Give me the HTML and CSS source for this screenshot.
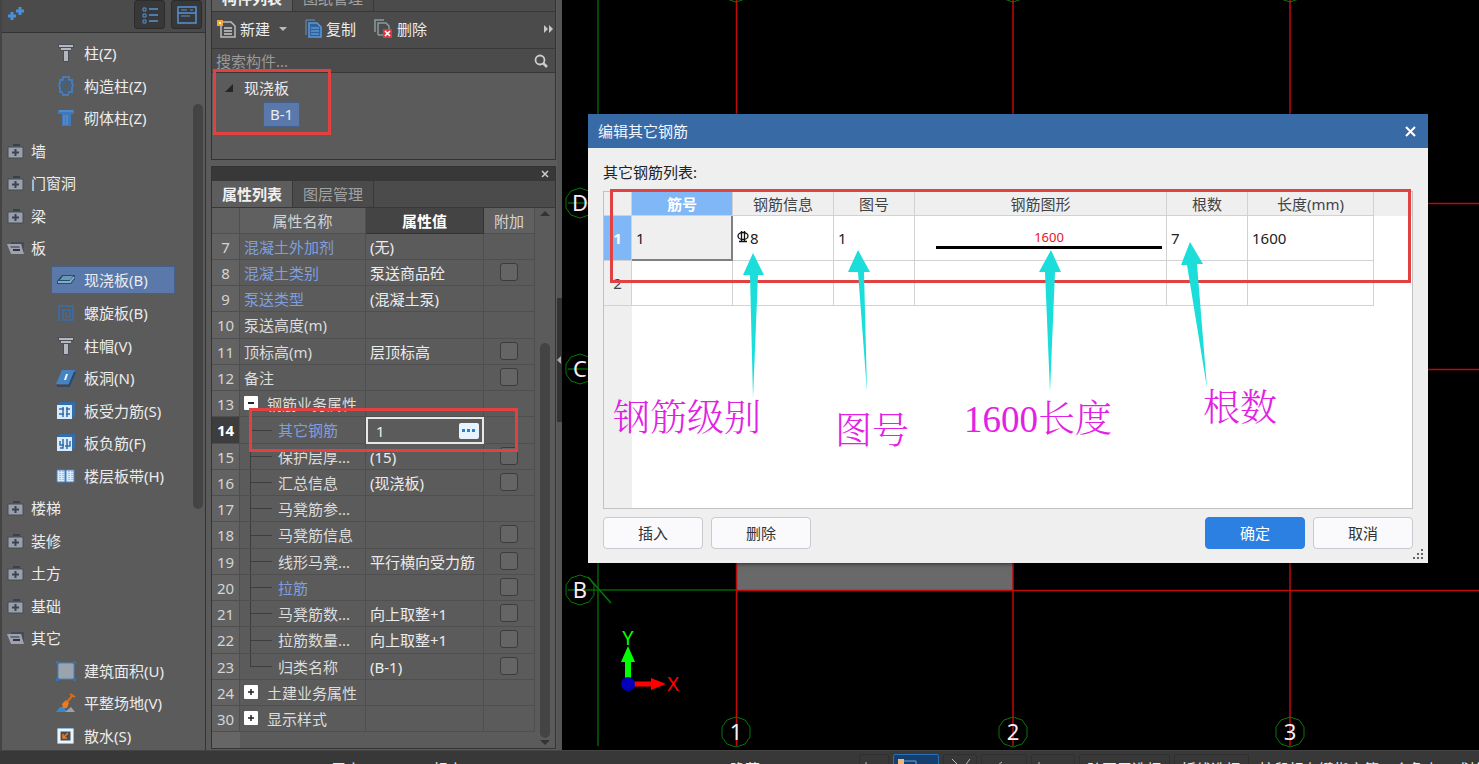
FILE: index.html
```html
<!DOCTYPE html>
<html lang="zh-CN">
<head>
<meta charset="utf-8">
<title>编辑其它钢筋</title>
<link rel="stylesheet" href="styles.css">
</head>
<body>
<svg class="defs" aria-hidden="true">
  <symbol id="folder" viewBox="0 0 18 16"><path d="M6 3V1h7v2z" fill="#39414c"/><path d="M1 4h15v11H1z" fill="#9a9fac" stroke="#464b55"/><path d="M8.500 6v7M5 9.500h7" stroke="#3d434e" stroke-width="2"/></symbol>
  <symbol id="open" viewBox="0 0 18 16"><path d="M4 3h12v9" fill="none" stroke="#454b55" stroke-width="2"/><path d="M0 4h14l3 10H4z" fill="#9da2ae"/><path d="M3 6h9l1 2H4z" fill="#656b76"/><path d="M6 10h7" stroke="#30363f" stroke-width="2"/></symbol>
  <symbol id="column" viewBox="0 0 20 20"><path d="M2 1h16v4l-3 1v2h-2v11H7V8H5V6L2 5z" fill="#4a4e56"/><path d="M3 3h14M5 6h10" stroke="#b3b7be" stroke-width="2"/><path d="M8 8h4v10H8z" fill="#b3b7be"/></symbol>
  <symbol id="tiecol" viewBox="0 0 20 20"><path d="M7 1h6v3h3v3l1 2-1 3v4h-3l-1 3H7l-1-3H4v-4L3 9l1-2V4h3z" fill="none" stroke="#477bb7" stroke-width="2"/><path d="M8 5h4v3h2v4h-2v3H8v-3H6V8h2z" fill="none" stroke="#3e648d" stroke-width="1.500"/></symbol>
  <symbol id="brickcol" viewBox="0 0 20 20"><path d="M2 2h16v4h-3v12H6V6H2z" fill="#4079bb"/><path d="M3 3h14M8 7v10M11 7v10" stroke="#6298d0"/></symbol>
  <symbol id="slab" viewBox="0 0 20 20"><path d="M1 11 6 5h13v4l-4 5H1z" fill="#244e70"/><path d="M4 10 7 6h10l-3 4z" fill="#6b99b2"/><path d="M2 12h12l4-5" fill="none" stroke="#84aec3" stroke-width="2"/></symbol>
  <symbol id="spiral" viewBox="0 0 20 20"><path d="M3 18V3h14v14H7V7h7v7h-4v-4" fill="none" stroke="#416997" stroke-width="2"/></symbol>
  <symbol id="hole" viewBox="0 0 20 20"><path d="M6 2h13l-6 14H0z" fill="#4683c2"/><path d="m1 17 1 1h11l6-14" fill="none" stroke="#254b76" stroke-width="2"/><path d="m8 12 2-6h2l-2 6z" fill="#f0f7ff"/></symbol>
  <symbol id="rebar" viewBox="0 0 20 20"><path d="M1 4 4 1h15v14l-3 3H1z" fill="#346da7"/><path d="M1 4h15v14H1z" fill="#d7ebff"/><path d="M3 8h5M10 8h4M3 13h5M10 13h4M7 6v10M11 6v10" stroke="#366ca5" stroke-width="1.500"/></symbol>
  <symbol id="negbar" viewBox="0 0 20 20"><path d="M1 4 4 1h15v14l-3 3H1z" fill="#346da7"/><path d="M1 4h15v14H1z" fill="#d7ebff"/><path d="M7 6v9H4M4 8v4h4M11 6v10M14 8v5H9" fill="none" stroke="#366ca5" stroke-width="1.500"/></symbol>
  <symbol id="strip" viewBox="0 0 20 20"><path d="M1 4h8v12H1zm9 0h8v12h-8z" fill="#d8ebff" stroke="#4c82bd"/><path d="M4 5v10M7 5v10M13 5v10M16 5v10" stroke="#639ad4" stroke-dasharray="1 1"/></symbol>
  <symbol id="area" viewBox="0 0 20 20"><path d="M2 2h16v16H2z" fill="#9ba3ac" stroke="#4b82bd"/><path d="M0 0h3v3H0zm17 0h3v3h-3zM0 17h3v3H0zm17 0h3v3h-3z" fill="#3b72ad"/></symbol>
  <symbol id="site" viewBox="0 0 20 20"><path d="M0 19 4 14h4l3 5z" fill="#3b86cf"/><path d="M9 19l6-5 4 5z" fill="#9aa2ad"/><path d="m6 11 4-4 3 3-2 5H7z" fill="#f17920"/><path d="m11 9 6-7M14 1l5 3" stroke="#d96c1d" stroke-width="2"/></symbol>
  <symbol id="apron" viewBox="0 0 20 20"><path d="M1 2h17v16H1z" fill="#3a79b9"/><path d="M3 4h13v12H3z" fill="#4b4c50" stroke="#e9f5ff" stroke-width="3"/><path d="m12 7-4 4M7 8v4h4" fill="none" stroke="#ed7d25" stroke-width="1.500"/></symbol>
  <symbol id="bubble" viewBox="-16 -16 32 32"><path d="M0-15 9-12 14-5V5L9 12 0 15-9 12-14 5V-5L-9-12z" fill="none" stroke="#087708"/></symbol>
</svg>

<div class="app">
  <main class="workspace">
    <aside class="modules">
      <div class="modules-bar">
        <svg class="sparkle" width="18" height="16" viewBox="0 0 18 16"><path d="M4 6v8M0 10h8M12 1v8M8 5h8" stroke="#4a90d9" stroke-width="3"/></svg>
        <button class="square" aria-label="列表视图"><svg width="18" height="18" viewBox="0 0 18 18"><path d="M2 2h3v3H2zm0 6h3v3H2zm0 6h3v3H2z" fill="none" stroke="#5592d6"/><path d="M8 3h9M8 9h9M8 15h9" stroke="#5592d6" stroke-width="1.500"/></svg></button>
        <button class="square" aria-label="窗口视图"><svg width="20" height="18" viewBox="0 0 20 18"><path d="M1 1h18v16H1zM1 7h18" fill="none" stroke="#5592d6" stroke-width="1.500"/><path d="M4 4h6M13 4h3M4 10h9" stroke="#5592d6"/></svg></button>
      </div>
      <div class="modules-body">
        <ul class="modules-list">
          <li class="sub"><svg><use href="#column"/></svg>柱(Z)</li>
          <li class="sub"><svg><use href="#tiecol"/></svg>构造柱(Z)</li>
          <li class="sub"><svg><use href="#brickcol"/></svg>砌体柱(Z)</li>
          <li><svg><use href="#folder"/></svg>墙</li>
          <li><svg><use href="#folder"/></svg>门窗洞</li>
          <li><svg><use href="#folder"/></svg>梁</li>
          <li><svg><use href="#open"/></svg>板</li>
          <li class="sub selected"><svg><use href="#slab"/></svg>现浇板(B)</li>
          <li class="sub"><svg><use href="#spiral"/></svg>螺旋板(B)</li>
          <li class="sub"><svg><use href="#column"/></svg>柱帽(V)</li>
          <li class="sub"><svg><use href="#hole"/></svg>板洞(N)</li>
          <li class="sub"><svg><use href="#rebar"/></svg>板受力筋(S)</li>
          <li class="sub"><svg><use href="#negbar"/></svg>板负筋(F)</li>
          <li class="sub"><svg><use href="#strip"/></svg>楼层板带(H)</li>
          <li><svg><use href="#folder"/></svg>楼梯</li>
          <li><svg><use href="#folder"/></svg>装修</li>
          <li><svg><use href="#folder"/></svg>土方</li>
          <li><svg><use href="#folder"/></svg>基础</li>
          <li><svg><use href="#open"/></svg>其它</li>
          <li class="sub"><svg><use href="#area"/></svg>建筑面积(U)</li>
          <li class="sub"><svg><use href="#site"/></svg>平整场地(V)</li>
          <li class="sub"><svg><use href="#apron"/></svg>散水(S)</li>
        </ul>
        <div class="modules-scroll"><div class="thumb"></div></div>
      </div>
    </aside>

    <section class="panels">
      <div class="components">
        <div class="tabs tabs-cut"><button class="tab active">构件列表</button><button class="tab">图纸管理</button></div>
        <div class="tools">
          <button class="tool"><svg width="20" height="20" viewBox="0 0 20 20"><path d="M5 3h9l4 4v11H4V7" fill="none" stroke="#b9bdc1" stroke-width="1.500"/><path d="M7 9h8M7 12h8M7 15h8" stroke="#c8ccd0" stroke-width="1.500"/><path d="M0 1h6v6H0z" fill="#f0a738"/><path d="M2 3h2v2H2z" fill="#fff0b8"/></svg>新建<span class="caret"></span></button>
          <button class="tool"><svg width="18" height="20" viewBox="0 0 18 20"><path d="M1 16V1h9" fill="none" stroke="#6893bf"/><path d="M4 4h8l4 4v10H4z" fill="#2f619d" stroke="#5b98dc" stroke-width="1.500"/><path d="M6 9h8M6 12h8M6 15h8" stroke="#79aee7"/></svg>复制</button>
          <button class="tool"><svg width="20" height="20" viewBox="0 0 20 20"><path d="M1 13V1h9M4 16V4h8l3 3v4M4 16h5" fill="none" stroke="#8c9ba1" stroke-width="1.500"/><path d="M9 10h9v9H9z" fill="#d83a40"/><path d="m11 12 5 5m0-5-5 5" stroke="#fff" stroke-width="1.500"/></svg>删除</button>
          <svg class="more" width="10" height="8" viewBox="0 0 10 8"><path d="m0 0 4 4-4 4zm5 0 4 4-4 4z" fill="#c8c8c8"/></svg>
        </div>
        <label class="search"><input type="text" placeholder="搜索构件..." aria-label="搜索构件"><svg width="14" height="14" viewBox="0 0 14 14"><circle cx="6" cy="6" r="4.500" fill="none" stroke="#ccc" stroke-width="1.800"/><path d="m9 9 4 4" stroke="#ccc" stroke-width="2.500"/></svg></label>
        <div class="tree">
          <div class="tree-root"><svg width="8" height="8" viewBox="0 0 8 8"><path d="M8 0v8H0z" fill="#252525"/></svg>现浇板</div>
          <div class="tree-leaf">B-1</div>
        </div>
      </div>

      <div class="properties">
        <div class="caption"><button aria-label="关闭面板"><svg width="8" height="8" viewBox="0 0 8 8"><path d="m1 1 6 6m0-6L1 7" stroke="#ccc" stroke-width="1.500"/></svg></button></div>
        <div class="tabs"><button class="tab active">属性列表</button><button class="tab">图层管理</button></div>
        <div class="props-body">
          <div class="props-main">
          <table class="props">
            <colgroup><col class="c-num"><col class="c-name"><col><col class="c-add"></colgroup>
            <thead><tr><th></th><th>属性名称</th><th class="current">属性值</th><th>附加</th></tr></thead>
            <tbody>
              <tr><th>7</th><td class="blue">混凝土外加剂</td><td>(无)</td><td></td></tr>
              <tr><th>8</th><td class="blue">混凝土类别</td><td>泵送商品砼</td><td><input type="checkbox" aria-label="附加 混凝土类别"></td></tr>
              <tr><th>9</th><td class="blue">泵送类型</td><td>(混凝土泵)</td><td></td></tr>
              <tr><th>10</th><td>泵送高度(m)</td><td></td><td></td></tr>
              <tr><th>11</th><td>顶标高(m)</td><td>层顶标高</td><td><input type="checkbox" aria-label="附加 顶标高"></td></tr>
              <tr><th>12</th><td>备注</td><td></td><td><input type="checkbox" aria-label="附加 备注"></td></tr>
              <tr><th>13</th><td><button class="fold" aria-label="折叠"><svg width="14" height="14" viewBox="0 0 14 14"><path d="M4 7h6" stroke="#222" stroke-width="2"/></svg></button>钢筋业务属性</td><td></td><td></td></tr>
              <tr class="editing"><th>14</th><td class="leaf blue">其它钢筋</td><td class="edit-cell"><div class="editor"><input type="text" value="1" aria-label="其它钢筋"><button aria-label="编辑其它钢筋"><svg width="20" height="16" viewBox="0 0 20 16"><path d="M3 6h3v3H3zm5 0h3v3H8zm5 0h3v3h-3z" fill="#2b80cf"/></svg></button></div></td><td></td></tr>
              <tr><th>15</th><td class="leaf">保护层厚...</td><td>(15)</td><td><input type="checkbox" aria-label="附加 保护层厚"></td></tr>
              <tr><th>16</th><td class="leaf">汇总信息</td><td>(现浇板)</td><td><input type="checkbox" aria-label="附加 汇总信息"></td></tr>
              <tr><th>17</th><td class="leaf">马凳筋参...</td><td></td><td></td></tr>
              <tr><th>18</th><td class="leaf">马凳筋信息</td><td></td><td><input type="checkbox" aria-label="附加 马凳筋信息"></td></tr>
              <tr><th>19</th><td class="leaf">线形马凳...</td><td>平行横向受力筋</td><td><input type="checkbox" aria-label="附加 线形马凳"></td></tr>
              <tr><th>20</th><td class="leaf blue">拉筋</td><td></td><td><input type="checkbox" aria-label="附加 拉筋"></td></tr>
              <tr><th>21</th><td class="leaf">马凳筋数...</td><td>向上取整+1</td><td><input type="checkbox" aria-label="附加 马凳筋数"></td></tr>
              <tr><th>22</th><td class="leaf">拉筋数量...</td><td>向上取整+1</td><td><input type="checkbox" aria-label="附加 拉筋数量"></td></tr>
              <tr><th>23</th><td class="leaf last">归类名称</td><td>(B-1)</td><td><input type="checkbox" aria-label="附加 归类名称"></td></tr>
              <tr><th>24</th><td><button class="fold" aria-label="展开"><svg width="14" height="14" viewBox="0 0 14 14"><path d="M4 7h6M7 4v6" stroke="#222" stroke-width="1.500"/></svg></button>土建业务属性</td><td></td><td></td></tr>
              <tr><th>30</th><td><button class="fold" aria-label="展开"><svg width="14" height="14" viewBox="0 0 14 14"><path d="M4 7h6M7 4v6" stroke="#222" stroke-width="1.500"/></svg></button>显示样式</td><td></td><td></td></tr>
            </tbody>
          </table>
          </div>
          <div class="props-scroll">
            <svg width="10" height="6" viewBox="0 0 10 6"><path d="m0 6 5-5 5 5z" fill="#333"/></svg>
            <div class="thumb"></div>
            <svg width="10" height="6" viewBox="0 0 10 6"><path d="m0 0 5 5 5-5z" fill="#333"/></svg>
          </div>
        </div>
      </div>
    </section>

    <div class="splitter"><div class="grip"><svg width="4" height="8" viewBox="0 0 4 8"><path d="M4 0v8L0 4z" fill="#aaa"/></svg></div></div>

    <section class="canvas">
      <svg class="drawing" width="100%" height="100%">
        <rect x="174" y="540" width="277" height="50" fill="#696969"/>
        <g stroke="#046204" stroke-width="1.500" fill="none"><path d="M36 0v746M6 203h30M6 369h30M6 590h169"/><path d="m26 577 23 26" stroke="#087708"/></g>
        <g stroke="#c00a0a" stroke-width="1.500" fill="none"><path d="M174.500 0v746M451 0v746M728 0v746"/><path d="M174 203.500h3000M174 369.500h3000M174 590.500h3000"/></g>
        <use href="#bubble" x="2" y="187" width="32" height="32"/><use href="#bubble" x="2" y="353" width="32" height="32"/><use href="#bubble" x="2" y="574" width="32" height="32"/>
        <use href="#bubble" x="158" y="716" width="32" height="32"/><use href="#bubble" x="435" y="716" width="32" height="32"/><use href="#bubble" x="712" y="716" width="32" height="32"/>
        <use href="#bubble" x="158" y="-29" width="32" height="32"/><use href="#bubble" x="435" y="-29" width="32" height="32"/><use href="#bubble" x="712" y="-29" width="32" height="32"/>
        <g class="axis-text"><text x="18" y="211">D</text><text x="18" y="377">C</text><text x="18" y="598">B</text><text x="174" y="740">1</text><text x="451" y="740">2</text><text x="728" y="740">3</text></g>
        <path d="M66 684v-26" stroke="#0f0" stroke-width="6"/><path d="m66 646 7 16H59z" fill="#0f0"/>
        <path d="M66 684h28" stroke="#f00" stroke-width="5"/><path d="m104 684-15-6v12z" fill="#f00"/>
        <circle cx="66" cy="684" r="7" fill="#00b"/>
        <text class="axis-y" x="66" y="645">Y</text><text class="axis-x" x="111" y="691">X</text>
      </svg>

      <section class="dialog" role="dialog" aria-labelledby="dlg-title">
        <header class="dialog-title"><span id="dlg-title">编辑其它钢筋</span><button aria-label="关闭"><svg width="11" height="11" viewBox="0 0 11 11"><path d="m1 1 9 9m0-9-9 9" stroke="#fff" stroke-width="2"/></svg></button></header>
        <div class="dialog-body">
          <div class="dialog-label">其它钢筋列表:</div>
          <div class="grid-box">
            <table class="bars">
              <colgroup><col class="b-num"><col class="b-no"><col class="b-info"><col class="b-fig"><col class="b-shape"><col class="b-count"><col class="b-len"><col></colgroup>
              <thead><tr><th></th><th class="hot">筋号</th><th>钢筋信息</th><th>图号</th><th>钢筋图形</th><th>根数</th><th>长度(mm)</th><th class="rest"></th></tr></thead>
              <tbody>
                <tr><th class="hot">1</th><td class="focus">1</td><td><svg class="grade" width="12" height="14" viewBox="0 0 12 14"><ellipse cx="6" cy="6" rx="5" ry="3.500" fill="none" stroke="#111" stroke-width="1.300"/><path d="M4.500 1v10M7.500 1v10M2 11.500h8" stroke="#111" stroke-width="1.300"/></svg>8</td><td>1</td><td class="shape"><span>1600</span></td><td>7</td><td>1600</td><td class="rest"></td></tr>
                <tr><th>2</th><td></td><td></td><td></td><td></td><td></td><td></td><td class="rest"></td></tr>
              </tbody>
            </table>
            <div class="gutter"></div>
          </div>
          <footer class="actions"><button>插入</button><button>删除</button><button class="primary">确定</button><button>取消</button></footer>
        </div>
        <svg class="resize" width="10" height="10" viewBox="0 0 10 10"><path d="M8 0h2v2H8zM4 4h2v2H4zm4 0h2v2H8zM0 8h2v2H0zm4 0h2v2H4zm4 0h2v2H8z" fill="#666"/></svg>
      </section>
    </section>
  </main>

  <footer class="status">
    <span class="s-floor">层高:</span><span class="s-level">标高:</span><span class="s-hide">隐藏:</span>
    <button aria-label="正交"><svg width="28" height="14" viewBox="0 0 28 14"><path d="M6 7v7" stroke="#bbb"/></svg></button>
    <button class="on" aria-label="捕捉"><svg width="42" height="14" viewBox="0 0 42 14"><path d="M4 4h6v7H4z" fill="#f2b57c"/><path d="M10 6h12v8" fill="none" stroke="#64a4e8"/></svg></button>
    <button class="cross" aria-label="交点"><svg width="32" height="14" viewBox="0 0 32 14"><path d="m8 4 8 8h4l6-8" fill="none" stroke="#bbb"/></svg></button>
    <button class="wide" aria-label="垂点"><svg width="42" height="14" viewBox="0 0 42 14"><path d="m16 10 4-3" stroke="#bbb"/></svg></button>
    <button class="mid" aria-label="中点"><svg width="42" height="14" viewBox="0 0 42 14"><path d="M7 7v7" stroke="#bbb"/></svg></button>
    <button class="layer">跨图层选择</button>
    <button class="fold-line">折线选择</button>
    <span class="hint">按鼠标左键指定第一个角点，或拾取构件图元</span>
  </footer>

  <svg class="marks" width="100%" height="100%" aria-hidden="true">
    <g fill="none" stroke="#e24141" stroke-width="3"><path d="M214.500 70.500h115v63h-115zM250.500 409.500h266v41h-266zM611.500 190.500h798v91h-798z"/></g>
    <g fill="#1bdedb">
      <path d="m753 253 11 22h-6l-5 123-3-123h-7z"/>
      <path d="m858 250 12 22h-6l3 120-9-120h-10z"/>
      <path d="m1051 250 10 22h-6l-5 120-5-120h-6z"/>
      <path d="m1190 242 13 22h-6l10 124-20-123h-6z"/>
    </g>
    <g class="notes"><text x="613" y="431">钢筋级别</text><text x="835" y="444">图号</text><text x="964" y="432">1600长度</text><text x="1203" y="421">根数</text></g>
  </svg>
</div>
</body>
</html>
```

FILE: styles.css
```css
* { box-sizing: border-box; }
body { margin: 0; background: #383838; }
body, button, input { font: 15px/20px "Noto Sans", "Noto Sans CJK SC", sans-serif; }
button { border: 0; padding: 0; background: none; color: inherit; }
.defs { position: absolute; width: 0; height: 0; }
.app { position: relative; height: 100vh; display: flex; flex-direction: column; overflow: hidden; color: #ececec; }
.workspace { flex: 1; min-height: 0; display: flex; background: #5b5b5b; }

/* module tree */
.modules { width: 206px; display: flex; flex-direction: column; border-right: 1px solid #333; border-left: 2px solid #444; }
.modules-bar { height: 33px; flex: none; display: flex; align-items: flex-start; gap: 6px; padding: 0 3px 0 6px; background: #4b4b4b; border-bottom: 1px solid #333; }
.sparkle { margin: 6px auto 0 0; }
.square { width: 31px; height: 29px; display: grid; place-items: center; background: #383838; border: 1px solid #2c2c2c; border-radius: 3px; }
.modules-body { flex: 1; min-height: 0; display: flex; overflow: hidden; }
.modules-list { flex: 1; margin: 0; padding: 4px 0 0; list-style: none; }
.modules-list li { height: 33px; display: flex; align-items: center; gap: 6px; padding-left: 5px; }
.modules-list li:nth-child(odd) { height: 32px; }
.modules-list svg { width: 18px; height: 16px; flex: none; }
.modules-list .sub { margin: 0 18px 0 49px; padding-left: 5px; gap: 8px; }
.modules-list .sub svg { width: 20px; height: 20px; }
.modules-list .selected { height: 28px; margin-top: 2px; margin-bottom: 3px; background: #5b78aa; border: 1px solid #46608b; padding-left: 4px; }
.modules-scroll { width: 12px; padding-top: 71px; }
.thumb { background: #444; border-radius: 5px; width: 10px; }
.modules-scroll .thumb { height: 405px; }

/* component and property panels */
.panels { width: 351px; padding: 0 1px 1px 5px; display: flex; flex-direction: column; gap: 6px; }
.components, .properties { border: 1px solid #333; }
.components { height: 160px; flex: none; border-top: 0; display: flex; flex-direction: column; }
.tabs { height: 27px; flex: none; display: flex; background: #4b4b4b; border-bottom: 1px solid #383838; }
.tabs-cut { height: 12px; align-items: flex-end; overflow: hidden; }
.tab { width: 81px; height: 26px; border-right: 1px solid #383838; color: #a2a2a2; flex: none; }
.tabs-cut .tab { height: 27px; }
.tab.active { background: #5d5d5d; color: #f0f0f0; font-weight: bold; }
.tools { height: 37px; flex: none; display: flex; align-items: center; gap: 18px; padding: 0 1px 2px 5px; background: #4b4b4b; border-bottom: 1px solid #383838; }
.tool { display: flex; align-items: center; gap: 3px; }
.caret { border: 4px solid transparent; border-top-color: #bbb; border-bottom: 0; margin-left: 6px; }
.more { margin-left: auto; }
.search { height: 24px; flex: none; display: flex; align-items: center; padding: 0 7px 0 4px; background: #4b4b4b; border-bottom: 1px solid #383838; }
.search input { flex: 1; min-width: 0; padding: 0; border: 0; background: none; color: #ddd; outline: 0; }
.search input::placeholder { color: #999; }
.tree { flex: 1; padding: 4px 0 0 13px; }
.tree-root { display: flex; align-items: center; gap: 11px; height: 22px; }
.tree-leaf { display: inline-block; margin: 3px 0 0 38px; padding: 1px 6px 2px; background: #5b78aa; border: 1px solid #46608b; line-height: 20px; }
.properties { flex: 1; min-height: 0; display: flex; flex-direction: column; }
.caption { height: 14px; flex: none; display: flex; justify-content: flex-end; align-items: center; background: #383838; padding-right: 6px; }
.caption button { display: flex; }
.props-body { flex: 1; min-height: 0; display: flex; }
.props-main { flex: 1; min-width: 0; background: linear-gradient(90deg, #666 28px, #5b5b5b 28px); }
.props { width: 100%; table-layout: fixed; border-collapse: separate; border-spacing: 0; }
.c-num { width: 28px; } .c-name { width: 126px; } .c-add { width: 51px; }
.props th, .props td { height: 26px; padding: 0 0 0 4px; border-right: 1px solid #4f4f4f; border-bottom: 1px solid #4f4f4f; font-weight: normal; text-align: left; white-space: nowrap; line-height: 20px; }
.props tbody tr:nth-child(4n) > * { height: 27px; }
.props thead th { text-align: center; padding: 0; background: #606060; color: #d4d4d4; }
.props thead .current { background: #444; color: #fff; font-weight: bold; border-color: #333; }
.props tbody th { text-align: center; padding: 0; background: #626262; color: #d4d4d4; }
.props td:nth-child(2) { color: #dcdcdc; }
.props td.blue { color: #7f9fdf; }
.props td:last-child { padding: 0; text-align: center; }
.props input[type=checkbox] { appearance: none; display: block; width: 18px; height: 18px; margin: 0 auto 2px; background: #656565; border: 1px solid #3c3c3c; border-radius: 3px; }
.props .leaf { padding-left: 38px; background: linear-gradient(#3d3d3d, #3d3d3d) 10px 0 / 1px 100% no-repeat, linear-gradient(#3d3d3d, #3d3d3d) 10px 50% / 22px 1px no-repeat; }
.props .last { background-size: 1px 50%, 22px 1px; }
.fold { display: inline-flex; width: 14px; height: 14px; margin-right: 9px; margin-left: 0; background: #fff; border-radius: 1px; vertical-align: 0; }
.props .editing th { background: #3d3d3d; color: #fff; font-weight: bold; }
.props .edit-cell { padding: 0; border: 0; }
.editor { height: 27px; display: flex; align-items: center; border: 2px solid #e8e8e8; padding: 0 3px 0 8px; }
.editor input { flex: 1; min-width: 0; padding: 0; border: 0; background: none; color: #eee; outline: 0; }
.editor button { display: flex; background: #e7f4ff; border-radius: 2px; }
.props-scroll { width: 20px; display: flex; flex-direction: column; align-items: center; padding: 2px 0; }
.props-scroll .thumb { margin-top: auto; margin-bottom: 2px; height: 395px; }
.splitter { width: 5px; flex: none; display: flex; flex-direction: column; padding-top: 298px; background: #555; }
.grip { height: 124px; background: #333; display: flex; align-items: center; }

/* model view */
.canvas { flex: 1; min-width: 0; position: relative; background: #000; overflow: hidden; }
.drawing { display: block; }
.drawing text { font: 22px "Noto Sans", sans-serif; text-anchor: middle; fill: #f4eef4; }
.drawing .axis-y { fill: #0f0; font-size: 20px; }
.drawing .axis-x { fill: #f00; font-size: 20px; }

/* dialog window */
.dialog { position: absolute; left: 26px; top: 114px; width: 840px; background: #efeff0; color: #333; box-shadow: 0 1px 4px #0008; }
.dialog-title { height: 34px; display: flex; align-items: center; justify-content: space-between; padding: 0 12px 0 10px; background: #386aa6; color: #f2f6ff; }
.dialog-title button { display: flex; }
.dialog-body { padding: 14px 15px; }
.dialog-label { color: #222; line-height: 20px; margin-bottom: 9px; }
.grid-box { height: 318px; display: flex; flex-direction: column; background: #fff; border: 1px solid #c2c2c4; }
.gutter { flex: 1; width: 28px; background: #efeff0; }
.bars { width: 100%; table-layout: fixed; border-collapse: separate; border-spacing: 0; }
.b-num { width: 28px; } .b-no, .b-info { width: 101px; } .b-fig, .b-count { width: 81px; } .b-shape { width: 252px; } .b-len { width: 126px; }
.bars th, .bars td { height: 45px; padding: 0 0 0 4px; border-right: 1px solid #d2d2d4; border-bottom: 1px solid #d2d2d4; text-align: left; font-weight: normal; color: #222; }
.bars thead th { height: 24px; padding: 0; text-align: center; background: #efeff0; color: #444; }
.bars tbody th { padding: 0; text-align: center; background: #efeff0; color: #444; }
.bars thead .hot, .bars tbody .hot { background: #80b8f7; color: #fff; font-weight: bold; }
.bars .focus { background: #efefef; border-right: 2px solid #808080; border-bottom: 2px solid #808080; }
.bars .rest { border: 0; }
.bars tbody .rest { background: #fff; }
.grade { margin-right: 1px; vertical-align: 0; }
.bars .shape { padding: 0 4px 0 21px; text-align: center; }
.shape span { display: block; color: #e8141c; font-size: 13px; line-height: 18px; border-bottom: 3px solid #000; }
.actions { display: flex; gap: 8px; margin-top: 8px; }
.actions button { width: 100px; height: 32px; background: #fafafc; border: 1px solid #c9c9d0; border-radius: 4px; color: #333; }
.actions .primary { margin-left: auto; background: #2c80e2; border-color: #2c80e2; color: #fff; }
.resize { position: absolute; right: 5px; bottom: 4px; }

/* status bar */
.status { height: 14px; flex: none; display: flex; align-items: flex-start; overflow: hidden; background: #383838; border-top: 1px solid #444; white-space: nowrap; }
.status span { padding-top: 8px; flex: none; }
.status button { height: 30px; width: 30px; flex: none; display: flex; align-items: flex-start; margin: 3px 4px 0 0; border: 1px solid #303030; border-radius: 2px; }
.status .on { width: 46px; background: #153f6d; border-color: #2870b8; }
.status .cross { width: 34px; }
.status .wide { width: 46px; }
.status .mid { width: 44px; }
.status .s-floor { width: 433px; padding-left: 331px; }
.status .s-level { width: 297px; }
.status .s-hide { width: 129px; }
.status .layer { width: 91px; padding: 4px 7px 0; }
.status .fold-line { width: 75px; padding: 4px 6px 0; }
.status .hint { padding-left: 6px; }

/* annotations over the whole window */
.marks { position: absolute; inset: 0; pointer-events: none; }
.notes text { font: 300 37px "Liberation Serif", "Noto Serif CJK SC", "Noto Sans CJK SC", serif; fill: #e321e3; }
```
